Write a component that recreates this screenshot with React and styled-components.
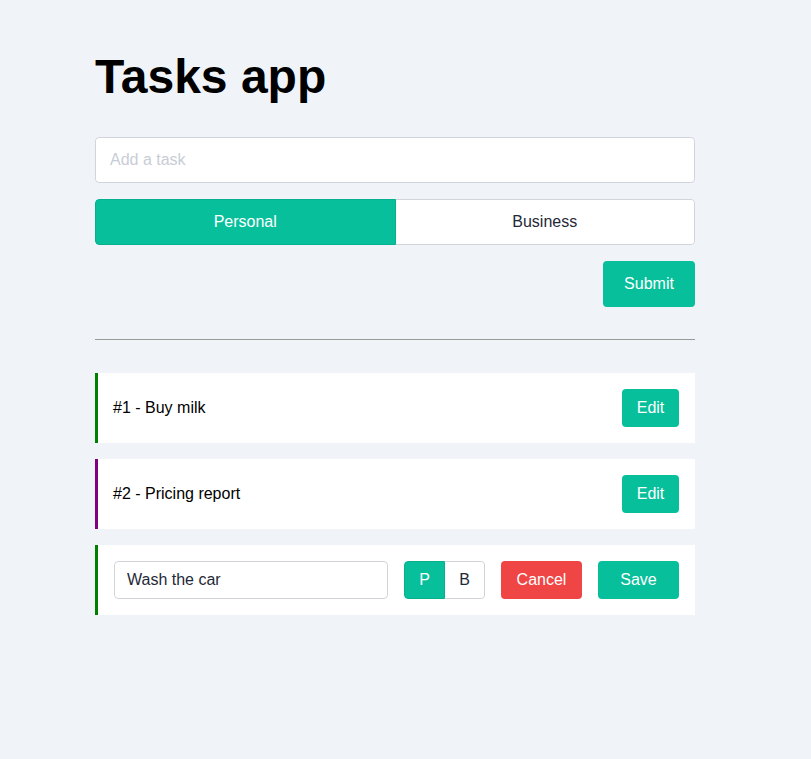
import { useState } from "react";
import styled, { createGlobalStyle } from "styled-components";

const GREEN = "#07bf9b";

const GlobalStyle = createGlobalStyle`
  * {
    box-sizing: border-box;
  }

  body {
    margin: 0;
    background: #f0f4f9;
    font-family: "Liberation Sans", Arial, sans-serif;
  }
`;

const initialTasks = [
  { id: 1, title: "Buy milk", type: "personal" },
  { id: 2, title: "Pricing report", type: "business" },
  { id: 3, title: "Wash the car", type: "personal", editing: true },
];

function App() {
  const [type, setType] = useState("personal");
  const [tasks] = useState(initialTasks);

  return (
    <>
      <GlobalStyle />
      <Page>
        <Title>Tasks app</Title>
        <Form onSubmit={(e) => e.preventDefault()}>
          <TextInput placeholder="Add a task" />
          <Toggle>
            <ToggleButton type="button" $active={type === "personal"} onClick={() => setType("personal")}>
              Personal
            </ToggleButton>
            <ToggleButton type="button" $active={type === "business"} onClick={() => setType("business")}>
              Business
            </ToggleButton>
          </Toggle>
          <Actions>
            <Button type="submit" $width="92px" $height="46px">
              Submit
            </Button>
          </Actions>
        </Form>
        <Divider />
        <List>
          {tasks.map((task) =>
            task.editing ? (
              <EditRow key={task.id} task={task} />
            ) : (
              <Row key={task.id} $type={task.type}>
                <Label>
                  #{task.id} - {task.title}
                </Label>
                <Button type="button" $width="57px">
                  Edit
                </Button>
              </Row>
            )
          )}
        </List>
      </Page>
    </>
  );
}

function EditRow({ task }) {
  const [value, setValue] = useState(task.title);
  const [type, setType] = useState(task.type);

  return (
    <Row $type={type}>
      <SmallInput value={value} onChange={(e) => setValue(e.target.value)} />
      <SmallToggle>
        <ToggleButton type="button" $active={type === "personal"} onClick={() => setType("personal")}>
          P
        </ToggleButton>
        <ToggleButton type="button" $active={type === "business"} onClick={() => setType("business")}>
          B
        </ToggleButton>
      </SmallToggle>
      <Button type="button" $width="81px" $color="#ef4545">
        Cancel
      </Button>
      <Button type="button" $width="81px">
        Save
      </Button>
    </Row>
  );
}

export default App;

const Page = styled.main`
  width: 695px;
  padding: 49px 0 40px 95px;
`;

const Title = styled.h1`
  margin: 0 0 33px;
  font-size: 48px;
  font-weight: 700;
  line-height: 55px;
  color: #000;
`;

const Form = styled.form`
  display: flex;
  flex-direction: column;
  gap: 16px;
`;

const TextInput = styled.input`
  height: 46px;
  padding: 0 14px;
  border: 1px solid #d1d5db;
  border-radius: 4px;
  background: #fff;
  font-family: inherit;
  font-size: 16px;
  color: #1f2937;
  outline: none;

  &::placeholder {
    color: #c8cdd5;
  }
`;

const Toggle = styled.div`
  display: flex;
  height: 46px;
  border-radius: 4px;
  overflow: hidden;
  background: #fff;
`;

const SmallToggle = styled(Toggle)`
  width: 81px;
  height: 38px;
  flex: none;
`;

const ToggleButton = styled.button`
  flex: 1;
  padding: 0;
  border: 1px solid ${({ $active }) => ($active ? "#05b08e" : "#d1d5db")};
  background: ${({ $active }) => ($active ? GREEN : "#fff")};
  color: ${({ $active }) => ($active ? "#fff" : "#1f2937")};
  font-family: inherit;
  font-size: 16px;
  cursor: pointer;

  &:first-child {
    border-radius: 4px 0 0 4px;
  }

  &:last-child {
    border-left: none;
    border-radius: 0 4px 4px 0;
  }
`;

const Actions = styled.div`
  display: flex;
  justify-content: flex-end;
`;

const Button = styled.button`
  flex: none;
  width: ${({ $width }) => $width};
  height: ${({ $height }) => $height || "38px"};
  padding: 0;
  border: none;
  border-radius: 4px;
  background: ${({ $color }) => $color || GREEN};
  color: #fff;
  font-family: inherit;
  font-size: 16px;
  cursor: pointer;
`;

const Divider = styled.hr`
  margin: 32px 0 33px;
  border: none;
  border-top: 1px solid #999;
`;

const List = styled.ul`
  display: flex;
  flex-direction: column;
  gap: 16px;
  margin: 0;
  padding: 0;
  list-style: none;
`;

const Row = styled.li`
  display: flex;
  align-items: center;
  gap: 16px;
  height: 70px;
  padding: 0 16px 0 15px;
  border-left: 3px solid ${({ $type }) => ($type === "business" ? "#800080" : "#008000")};
  background: #fff;
`;

const Label = styled.span`
  flex: 1;
  font-size: 16px;
  color: #000;
`;

const SmallInput = styled(TextInput)`
  flex: 1;
  min-width: 0;
  height: 38px;
  margin-left: 1px;
  padding: 0 12px;
`;
